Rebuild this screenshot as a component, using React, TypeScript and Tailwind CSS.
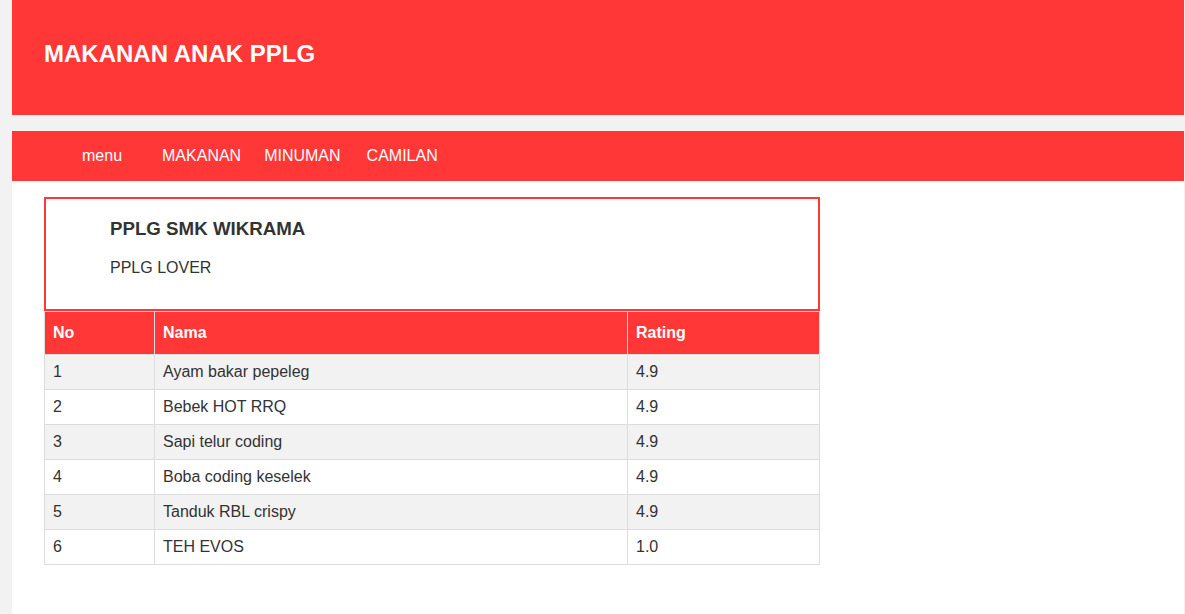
const rows = [
  { no: 1, nama: "Ayam bakar pepeleg", rating: "4.9" },
  { no: 2, nama: "Bebek HOT RRQ", rating: "4.9" },
  { no: 3, nama: "Sapi telur coding", rating: "4.9" },
  { no: 4, nama: "Boba coding keselek", rating: "4.9" },
  { no: 5, nama: "Tanduk RBL crispy", rating: "4.9" },
  { no: 6, nama: "TEH EVOS", rating: "1.0" },
];

export default function App() {
  return (
    <div className="min-h-[614px] bg-[#f2f2f2] pl-[12px] pr-[1px] font-['Liberation_Sans',Arial,sans-serif]">
      <header className="h-[115px] bg-[#ff3737] px-[32px] pt-[40px]">
        <h1 className="text-[24px] font-bold leading-[28px] text-white">MAKANAN ANAK PPLG</h1>
      </header>
      <div className="h-[16px]" />
      <nav className="flex h-[50px] items-center bg-[#ff3737] text-[16px] text-white">
        <a className="ml-[70px]">menu</a>
        <a className="ml-[40px]">MAKANAN</a>
        <a className="ml-[23px]">MINUMAN</a>
        <a className="ml-[26px]">CAMILAN</a>
      </nav>
      <main className="min-h-[433px] bg-white px-[32px] pt-[16px]">
        <div className="w-[776px]">
          <div className="h-[114px] border-2 border-[#ff3737] pl-[64px] pt-[18px] text-[#333]">
            <h2 className="text-[18.72px] font-bold leading-[24px]">PPLG SMK WIKRAMA</h2>
            <p className="mt-[18px] text-[16px] leading-[18px]">PPLG LOVER</p>
          </div>
          <table className="w-full border-collapse text-[16px] text-[#333]">
            <thead>
              <tr className="h-[43px] bg-[#ff3737] text-left text-white">
                <th className="w-[110px] border border-[#ddd] px-[8px] font-bold">No</th>
                <th className="w-[473px] border border-[#ddd] px-[8px] font-bold">Nama</th>
                <th className="border border-[#ddd] px-[8px] font-bold">Rating</th>
              </tr>
            </thead>
            <tbody>
              {rows.map((r, i) => (
                <tr key={r.no} className={i % 2 === 0 ? "h-[35px] bg-[#f2f2f2]" : "h-[35px] bg-white"}>
                  <td className="border border-[#ddd] px-[8px]">{r.no}</td>
                  <td className="border border-[#ddd] px-[8px]">{r.nama}</td>
                  <td className="border border-[#ddd] px-[8px]">{r.rating}</td>
                </tr>
              ))}
            </tbody>
          </table>
        </div>
      </main>
    </div>
  );
}
